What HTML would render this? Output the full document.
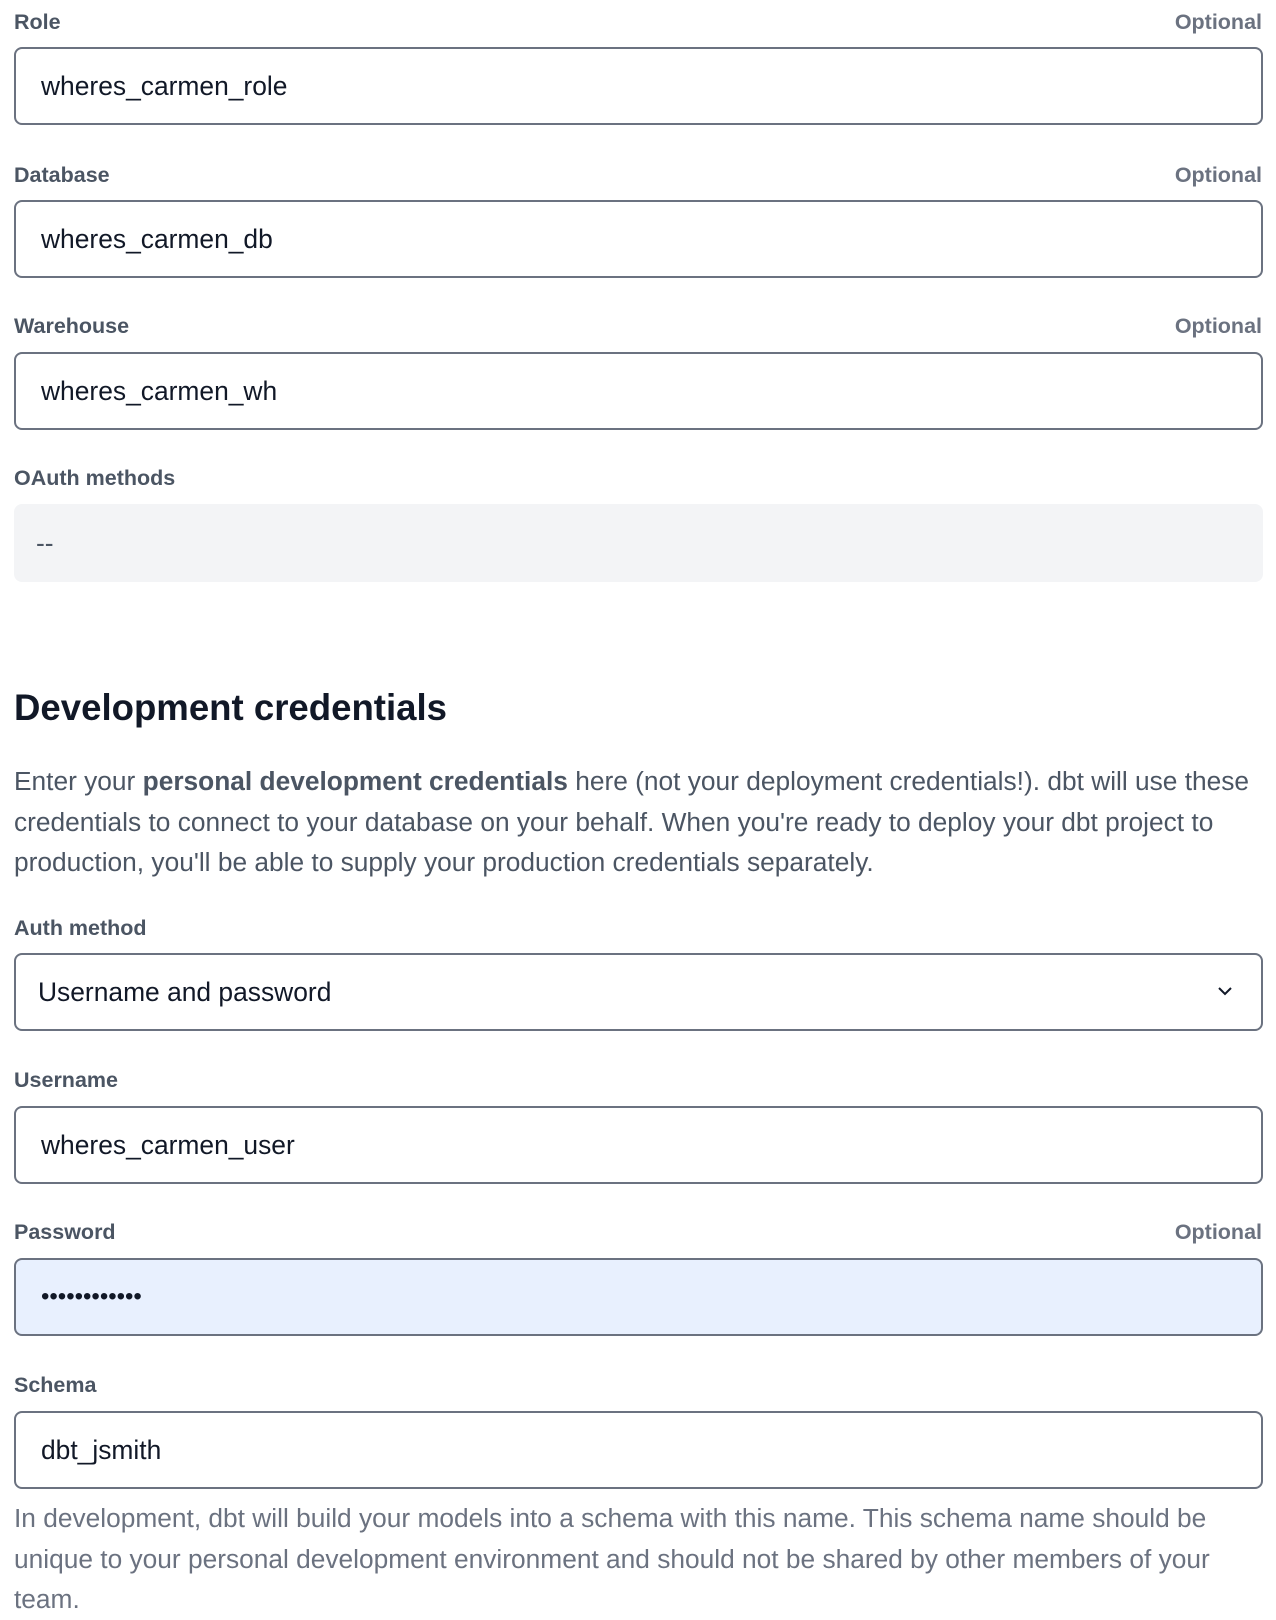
<!DOCTYPE html>
<html><head><meta charset="utf-8"><style>
*{box-sizing:border-box;margin:0;padding:0}
body{width:1276px;height:1616px;background:#fff;font-family:"Liberation Sans",sans-serif;position:relative;overflow:hidden}
.l{position:absolute;left:14px;font-size:21.5px;font-weight:bold;color:#4b5563;line-height:24px}
.o{position:absolute;right:14px;font-size:21.5px;font-weight:bold;color:#6b7280;line-height:24px}
.i{position:absolute;left:14px;width:1249px;height:78px;border:2px solid #6b7280;border-radius:8px;font-size:26.4px;color:#111827;padding-left:25px;line-height:74px;white-space:nowrap}
.p{position:absolute;left:14px;font-size:26.3px;line-height:40.5px;white-space:nowrap}
</style></head><body>
<div class="l" style="top:10px">Role</div><div class="o" style="top:10px">Optional</div>
<div class="i" style="top:47px">wheres_carmen_role</div>
<div class="l" style="top:163px">Database</div><div class="o" style="top:163px">Optional</div>
<div class="i" style="top:200px">wheres_carmen_db</div>
<div class="l" style="top:314px">Warehouse</div><div class="o" style="top:314px">Optional</div>
<div class="i" style="top:352px">wheres_carmen_wh</div>
<div class="l" style="top:466px">OAuth methods</div>
<div class="i" style="top:504px;border:none;background:#f3f4f6;padding-left:22px;line-height:78px;color:#4b5563">--</div>
<div style="position:absolute;left:14px;top:686px;font-size:36.6px;font-weight:bold;color:#111827;line-height:44px">Development credentials</div>
<div class="p" style="top:761px;color:#4b5563">Enter your <b>personal development credentials</b> here (not your deployment credentials!). dbt will use these<br>credentials to connect to your database on your behalf. When you're ready to deploy your dbt project to<br>production, you'll be able to supply your production credentials separately.</div>
<div class="l" style="top:916px">Auth method</div>
<div class="i" style="top:953px;padding-left:22px">Username and password
<svg style="position:absolute;right:28px;top:30px" width="16" height="12" viewBox="0 0 16 12"><path d="M2 3l6 6 6-6" fill="none" stroke="#111827" stroke-width="2"/></svg></div>
<div class="l" style="top:1068px">Username</div>
<div class="i" style="top:1106px">wheres_carmen_user</div>
<div class="l" style="top:1220px">Password</div><div class="o" style="top:1220px">Optional</div>
<div class="i" style="top:1258px;background:#e8f0fe;font-size:24px;letter-spacing:0px">••••••••••••</div>
<div class="l" style="top:1373px">Schema</div>
<div class="i" style="top:1411px">dbt_jsmith</div>
<div class="p" style="top:1498px;color:#6b7280">In development, dbt will build your models into a schema with this name. This schema name should be<br>unique to your personal development environment and should not be shared by other members of your<br>team.</div>
</body></html>
